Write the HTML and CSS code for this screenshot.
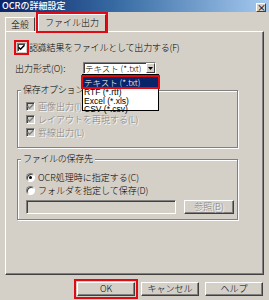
FILE: index.html
```html
<!DOCTYPE html>
<html lang="ja">
<head>
    <meta charset="UTF-8">
    <title>OCRの詳細設定</title>
    <link rel="stylesheet" href="styles.css">
</head>
<body>
<div class="window">
    <div class="titlebar">
        <span class="title">OCRの詳細設定</span>
        <span class="close">×</span>
    </div>

    <div class="tabs">
        <div class="tab">全般</div>
        <div class="tab active">ファイル出力</div>
    </div>

    <div class="panel">
        <div class="row main-check">
            <span class="check marked">
                <svg width="7" height="7" viewBox="0 0 7 7"><polyline points="0.5,3.2 2.5,5.2 6.5,1.2" fill="none" stroke="#000" stroke-width="1.6"/></svg>
            </span>
            <span>認識結果をファイルとして出力する(F)</span>
        </div>

        <div class="row format">
            <span class="format-label">出力形式(O):</span>
            <div class="select">
                <span class="select-text">テキスト (*.txt)</span>
                <span class="select-arrow">
                    <svg width="5" height="3" viewBox="0 0 5 3"><polygon points="0,0 5,0 2.5,3" fill="#000"/></svg>
                </span>
                <div class="dropdown">
                    <div class="option selected">テキスト (*.txt)</div>
                    <div class="option">RTF (*.rtf)</div>
                    <div class="option">Excel (*.xls)</div>
                    <div class="option">CSV (*.csv)</div>
                </div>
            </div>
        </div>

        <fieldset class="group options">
            <legend>保存オプション</legend>
            <div class="row disabled">
                <span class="check off">
                    <svg width="7" height="7" viewBox="0 0 7 7"><polyline points="0.5,3.2 2.5,5.2 6.5,1.2" fill="none" stroke="#808080" stroke-width="1.6"/></svg>
                </span>
                <span>画像出力(I)</span>
            </div>
            <div class="row disabled">
                <span class="check off">
                    <svg width="7" height="7" viewBox="0 0 7 7"><polyline points="0.5,3.2 2.5,5.2 6.5,1.2" fill="none" stroke="#808080" stroke-width="1.6"/></svg>
                </span>
                <span>レイアウトを再現する(L)</span>
            </div>
            <div class="row disabled">
                <span class="check off">
                    <svg width="7" height="7" viewBox="0 0 7 7"><polyline points="0.5,3.2 2.5,5.2 6.5,1.2" fill="none" stroke="#808080" stroke-width="1.6"/></svg>
                </span>
                <span>罫線出力(L)</span>
            </div>
        </fieldset>

        <fieldset class="group target">
            <legend>ファイルの保存先</legend>
            <div class="row">
                <span class="radio on"></span>
                <span>OCR処理時に指定する(C)</span>
            </div>
            <div class="row">
                <span class="radio"></span>
                <span>フォルダを指定して保存(D)</span>
            </div>
            <div class="path-row">
                <span class="path-field"></span>
                <span class="btn disabled-btn">参照(B)</span>
            </div>
        </fieldset>
    </div>

    <div class="buttons">
        <span class="btn wide ok">OK</span>
        <span class="btn wide">キャンセル</span>
        <span class="btn wide">ヘルプ</span>
    </div>
</div>
</body>
</html>
```

FILE: styles.css
```css
* { box-sizing: border-box; }
body {
    margin: 0;
    font-family: "Noto Sans CJK JP", "Liberation Sans", sans-serif;
    font-size: 9px;
    font-weight: 300;
    color: #000;
}
.window {
    width: 269px;
    height: 300px;
    background: #d4d0c8;
    overflow: hidden;
}

/* title bar */
.titlebar {
    height: 12px;
    padding: 0 3px 0 2px;
    display: flex;
    align-items: center;
    justify-content: space-between;
    background: linear-gradient(to right, #0a246a, #3a6ea5 45%, #a6caf0);
    color: #fff;
    font-weight: 500;
    line-height: 12px;
}
.close {
    width: 10px;
    height: 9px;
    margin-top: 3px;
    background: #d4d0c8;
    color: #000;
    font-size: 9px;
    line-height: 8px;
    text-align: center;
    border: 1px solid;
    border-color: #fff #404040 #404040 #fff;
}

/* tabs */
.tabs {
    height: 19px;
    padding-left: 5px;
    display: flex;
    align-items: flex-end;
}
.tab {
    height: 14px;
    padding: 0 5px;
    line-height: 13px;
    border: 1px solid;
    border-color: #fff #404040 transparent #fff;
    border-bottom: none;
}
.tab.active {
    height: 17px;
    margin-left: 3px;
    padding: 0 6px;
    line-height: 16px;
    outline: 2px solid #e00b12;
}

/* panel */
.panel {
    width: 259px;
    height: 244px;
    margin-left: 5px;
    padding: 0 0 0 11px;
    border: 1px solid;
    border-color: #fff #404040 #404040 #fff;
    box-shadow: inset -1px -1px #808080;
}
.row {
    display: flex;
    align-items: center;
    gap: 3px;
    height: 13px;
    white-space: nowrap;
}
.main-check {
    margin-top: 9px;
    height: 12px;
    letter-spacing: -0.2px;
}
.check {
    width: 9px;
    height: 9px;
    display: flex;
    align-items: center;
    justify-content: center;
    background: #fff;
    border: 1px solid;
    border-color: #808080 #fff #fff #808080;
    box-shadow: inset 1px 1px #404040;
}
.check.marked {
    outline: 2px solid #e00b12;
    outline-offset: 1px;
}
.check.off { background: #d4d0c8; }
.disabled {
    color: #808080;
    text-shadow: 1px 1px 0 #fff;
}

/* output format */
.format {
    margin-top: 9px;
    margin-left: -2px;
    height: 12px;
    gap: 0;
}
.format-label { width: 68px; }
.select {
    position: relative;
    width: 73px;
    height: 12px;
    display: flex;
    background: #fff;
    border: 1px solid;
    border-color: #808080 #fff #fff #808080;
    box-shadow: inset 1px 1px #404040;
}
.select-text {
    flex: 1;
    padding-left: 1px;
    font-size: 8.5px;
    line-height: 10px;
    overflow: hidden;
}
.select-arrow {
    width: 9px;
    height: 10px;
    display: flex;
    align-items: center;
    justify-content: center;
    background: #d4d0c8;
    border: 1px solid;
    border-color: #fff #404040 #404040 #fff;
}
.dropdown {
    position: absolute;
    top: 11px;
    left: -2px;
    width: 77px;
    height: 37px;
    padding-top: 2px;
    background: #fff;
    border: 1px solid #000;
    z-index: 2;
}
.option {
    height: 8.5px;
    padding-left: 1px;
    font-family: "Liberation Sans", sans-serif;
    font-size: 8.5px;
    font-weight: 400;
    line-height: 8.5px;
}
.option.selected {
    height: 10px;
    margin-bottom: 1px;
    line-height: 10px;
    background: #0a246a;
    color: #fff;
    font-family: "Noto Sans CJK JP", sans-serif;
    font-weight: 300;
    outline: 2px solid #e00b12;
}

/* group boxes */
.group {
    width: 221px;
    margin: 0;
    padding: 4px 0 8px 8px;
    border: 1px solid #808080;
    box-shadow: inset 1px 1px #fff, 1px 1px #fff;
    min-width: 0;
}
.group legend {
    margin-left: -5px;
    padding: 0 2px;
    line-height: 12px;
    background: #d4d0c8;
    letter-spacing: -0.3px;
}
.options { margin-top: 10px; }
.target {
    margin-top: 5px;
    padding: 6px 0 5px 8px;
}
.radio {
    width: 9px;
    height: 9px;
    border-radius: 50%;
    background: #fff;
    border: 1px solid;
    border-color: #808080 #fff #fff #808080;
    box-shadow: inset 1px 1px #404040;
    display: flex;
    align-items: center;
    justify-content: center;
}
.radio.on::after {
    content: "";
    width: 3px;
    height: 3px;
    border-radius: 50%;
    background: #000;
}
.path-row {
    display: flex;
    gap: 8px;
    margin-top: 3px;
    height: 14px;
}
.path-field {
    width: 150px;
    height: 14px;
    border: 1px solid;
    border-color: #808080 #fff #fff #808080;
    box-shadow: inset 1px 1px #404040;
}

/* buttons */
.btn {
    height: 14px;
    display: flex;
    align-items: center;
    justify-content: center;
    background: #d4d0c8;
    border: 1px solid;
    border-color: #fff #404040 #404040 #fff;
    box-shadow: inset -1px -1px #808080;
    line-height: 12px;
}
.disabled-btn {
    width: 50px;
    color: #808080;
    text-shadow: 1px 1px 0 #fff;
}
.buttons {
    display: flex;
    justify-content: flex-end;
    gap: 6px;
    margin-top: 7px;
    padding-right: 6px;
}
.wide { width: 58px; }
.ok {
    outline: 2px solid #e00b12;
    outline-offset: 1px;
}
```
